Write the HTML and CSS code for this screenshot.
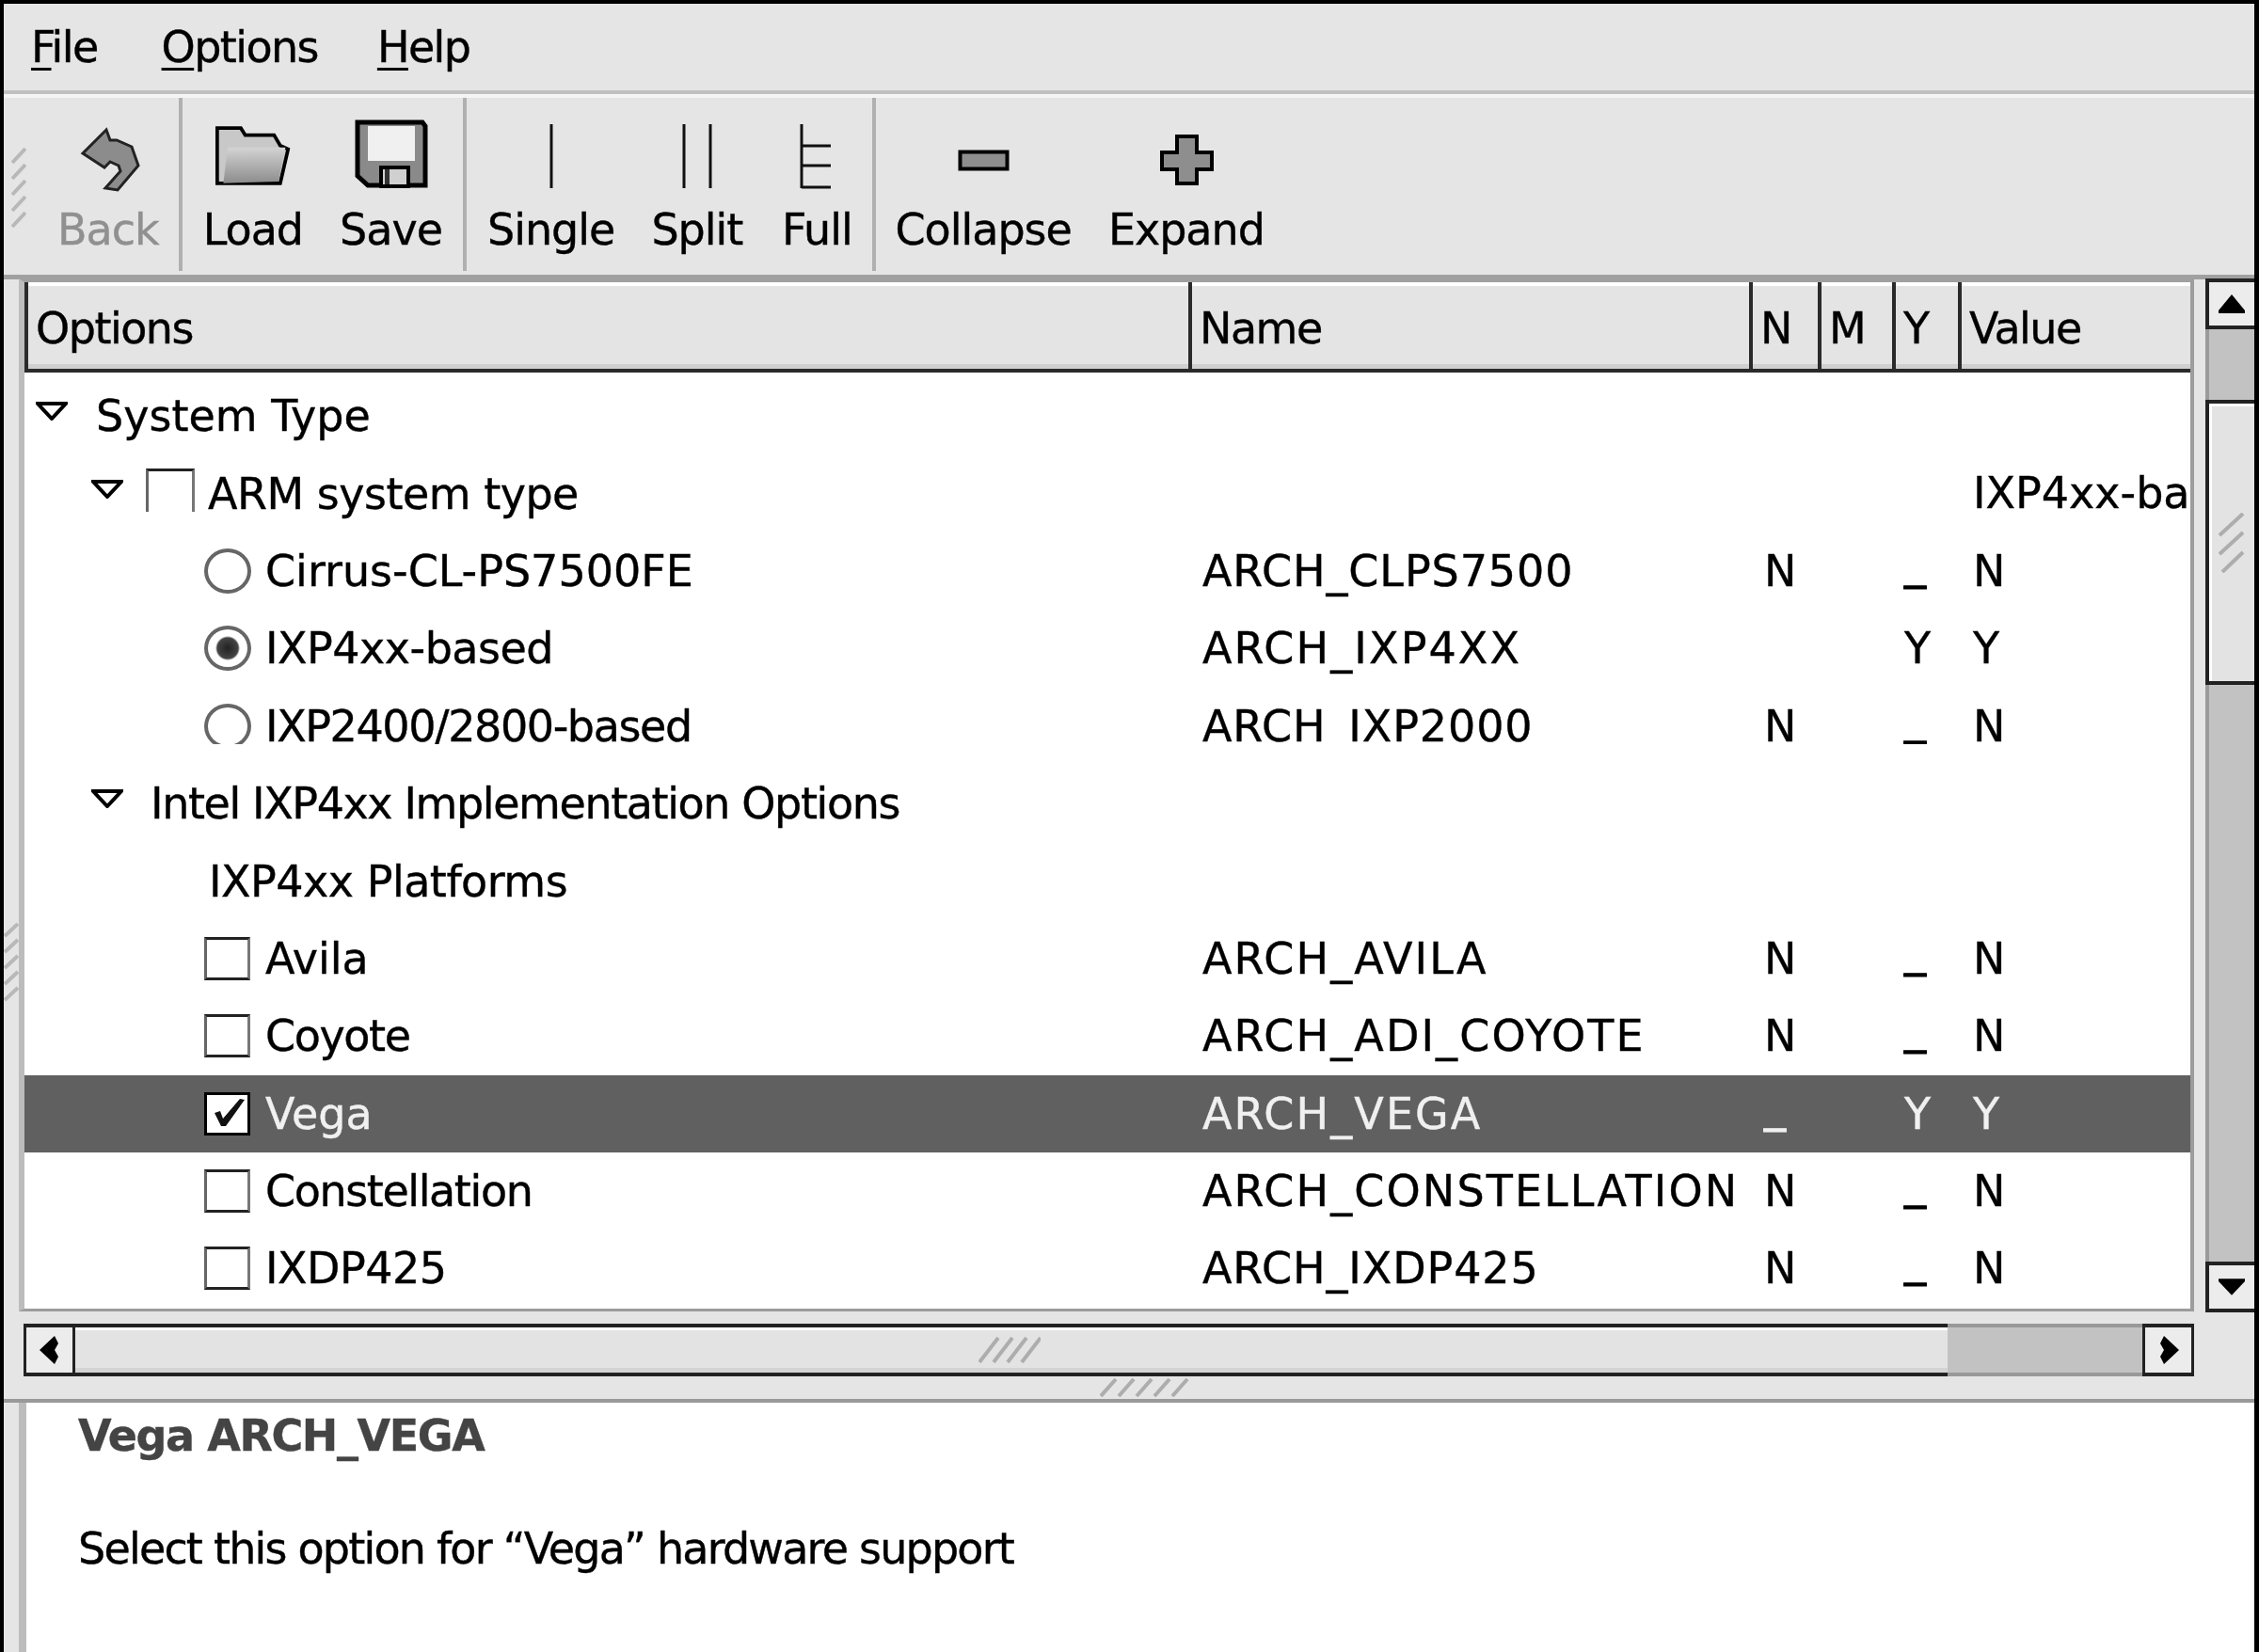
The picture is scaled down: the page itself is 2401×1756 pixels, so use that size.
FILE: index.html
```html
<!DOCTYPE html>
<html>

<head>
    <meta charset="utf-8">
    <title>Linux Kernel Configuration</title>
    <link rel="stylesheet" href="styles.css">
</head>

<body>
    <div class="window">
        <div class="menubar">
            <span><u>F</u>ile</span>
            <span><u>O</u>ptions</span>
            <span><u>H</u>elp</span>
        </div>

        <div class="toolbar">
            <div class="tb-group tb-first">
                <svg class="handle" viewBox="0 0 16 88">
                    <path d="M1 16 15 1M1 33 15 18M1 50 15 35M1 67 15 52M1 84 15 69" />
                </svg>
                <div class="tool disabled">
                    <svg class="icon" viewBox="75 127 80 76">
                        <path class="ic-fill" d="M113 138 88 163 111 178 117 172 126 176 128 182 112 200 125 202 147 176 140 156 124 149 117 149z" />
                    </svg>
                    Back
                </div>
            </div>
            <div class="tb-group">
                <div class="tool">
                    <svg class="icon" viewBox="230 127 86 76">
                        <defs>
                            <linearGradient id="folderGrad" x1="0" y1="0" x2="0" y2="1">
                                <stop offset="0" stop-color="#d4d4d4" />
                                <stop offset="1" stop-color="#8c8c8c" />
                            </linearGradient>
                        </defs>
                        <path class="ic-folder" d="M232 134H259L264 142H297L304 154 313 158 304 197H232z" />
                        <path class="ic-flap" d="M239 197 244 156H310L302 195z" />
                    </svg>
                    Load
                </div>
                <div class="tool">
                    <svg class="icon" viewBox="378 127 78 76">
                        <path class="ic-floppy" d="M381 130H450L453 134V197H392L381 187z" />
                        <rect class="ic-white" x="392" y="134" width="50" height="37" />
                        <rect class="ic-slide" x="406" y="178" width="29" height="20" />
                        <rect class="ic-bar" x="410" y="180" width="5" height="16" />
                    </svg>
                    Save
                </div>
            </div>
            <div class="tb-group tb-third">
                <div class="tool">
                    <svg class="icon" viewBox="542 127 80 76">
                        <path class="ic-thin" d="M582 132V200" />
                    </svg>
                    Single
                </div>
                <div class="tool">
                    <svg class="icon" viewBox="695 127 80 76">
                        <path class="ic-thin" d="M721 132V200M749 132V200" />
                    </svg>
                    Split
                </div>
                <div class="tool">
                    <svg class="icon" viewBox="825 127 80 76">
                        <path class="ic-thin" d="M849 132V200M849 155H880M849 176H880M849 199H880" />
                    </svg>
                    Full
                </div>
            </div>
            <div class="tb-group tb-last">
                <div class="tool">
                    <svg class="icon" viewBox="1006 127 80 76">
                        <rect class="ic-fill" x="1021.500" y="161.500" width="50" height="18" />
                    </svg>
                    Collapse
                </div>
                <div class="tool">
                    <svg class="icon" viewBox="1224 127 80 76">
                        <path class="ic-fill" d="M1254 145H1275V162H1291V180H1275V195H1254V180H1238V162H1254z" />
                    </svg>
                    Expand
                </div>
            </div>
        </div>

        <div class="work">
            <div class="strip">
                <svg class="grip-left" viewBox="0 0 16 90">
                    <path d="M1 14 15 1M1 31 15 18M1 48 15 35M1 65 15 52M1 82 15 69" />
                </svg>
            </div>
            <div class="tree-area">
                <div class="tree">
                    <div class="row-grid header">
                        <div>Options</div>
                        <div>Name</div>
                        <div>N</div>
                        <div>M</div>
                        <div>Y</div>
                        <div>Value</div>
                    </div>

                    <div class="rows">
                        <div class="row-grid row">
                            <div class="opt l0"><svg class="tri" viewBox="0 0 34 20"><path d="M2 2H32L17 18z" /></svg><span>System Type</span></div>
                            <div></div><div></div><div></div><div></div><div></div>
                        </div>
                        <div class="row-grid row">
                            <div class="opt l1"><svg class="tri" viewBox="0 0 34 20"><path d="M2 2H32L17 18z" /></svg><i class="check open"></i><span class="snug">ARM system type</span></div>
                            <div></div><div></div><div></div><div></div>
                            <div class="val cut">IXP4xx-ba</div>
                        </div>
                        <div class="row-grid row">
                            <div class="opt l2"><i class="radio"></i><span>Cirrus-CL-PS7500FE</span></div>
                            <div class="nm">ARCH_CLPS7500</div><div class="n">N</div><div></div><div class="y us">_</div><div class="val">N</div>
                        </div>
                        <div class="row-grid row">
                            <div class="opt l2"><i class="radio on"></i><span class="snug">IXP4xx-based</span></div>
                            <div class="nm wide">ARCH_IXP4XX</div><div></div><div></div><div class="y">Y</div><div class="val">Y</div>
                        </div>
                        <div class="row-grid row clipped">
                            <div class="opt l2"><i class="radio"></i><span class="tight">IXP2400/2800-based</span></div>
                            <div class="nm">ARCH_IXP2000</div><div class="n">N</div><div></div><div class="y us">_</div><div class="val">N</div>
                        </div>
                        <div class="row-grid row">
                            <div class="opt l1"><svg class="tri" viewBox="0 0 34 20"><path d="M2 2H32L17 18z" /></svg><span class="tight">Intel IXP4xx Implementation Options</span></div>
                            <div></div><div></div><div></div><div></div><div></div>
                        </div>
                        <div class="row-grid row">
                            <div class="opt l3"><span class="snug">IXP4xx Platforms</span></div>
                            <div></div><div></div><div></div><div></div><div></div>
                        </div>
                        <div class="row-grid row">
                            <div class="opt l2"><i class="check"></i><span>Avila</span></div>
                            <div class="nm wide">ARCH_AVILA</div><div class="n">N</div><div></div><div class="y us">_</div><div class="val">N</div>
                        </div>
                        <div class="row-grid row">
                            <div class="opt l2"><i class="check"></i><span class="tight">Coyote</span></div>
                            <div class="nm wide">ARCH_ADI_COYOTE</div><div class="n">N</div><div></div><div class="y us">_</div><div class="val">N</div>
                        </div>
                        <div class="row-grid row selected">
                            <div class="opt l2">
                                <i class="check on"><svg viewBox="0 0 43 40"><path d="M8 19 14 17 17 25 35 4 40 5 20 33 15 33z" /></svg></i><span>Vega</span>
                            </div>
                            <div class="nm wide">ARCH_VEGA</div><div class="n us">_</div><div></div><div class="y">Y</div><div class="val">Y</div>
                        </div>
                        <div class="row-grid row">
                            <div class="opt l2"><i class="check"></i><span class="tight">Constellation</span></div>
                            <div class="nm wide">ARCH_CONSTELLATION</div><div class="n">N</div><div></div><div class="y us">_</div><div class="val">N</div>
                        </div>
                        <div class="row-grid row">
                            <div class="opt l2"><i class="check"></i><span class="snug">IXDP425</span></div>
                            <div class="nm">ARCH_IXDP425</div><div class="n">N</div><div></div><div class="y us">_</div><div class="val">N</div>
                        </div>
                    </div>
                </div>

                <div class="hscroll">
                    <div class="sb-btn hbtn"><svg viewBox="0 0 22 30"><path d="M16 0 0 15 16 30 20 22 16 15 20 8z" /></svg></div>
                    <div class="hthumb">
                        <svg class="grip-h" viewBox="0 0 66 28"><path d="M1 27 21 1M16 27 36 1M31 27 51 1M46 27 66 1" /></svg>
                    </div>
                    <div class="htrough"></div>
                    <div class="sb-btn hbtn"><svg viewBox="0 0 22 30"><path d="M6 0 22 15 6 30 2 22 6 15 2 8z" /></svg></div>
                </div>
            </div>

            <div class="vscroll">
                <div class="sb-btn vbtn"><svg viewBox="0 0 28 20"><path d="M14 0 28 17V20H0V17z" /></svg></div>
                <div class="vtrough vtrough-top"></div>
                <div class="vthumb">
                    <svg class="grip-v" viewBox="0 0 28 64"><path d="M1 24 26 1M1 44 26 21M4 63 26 42" /></svg>
                </div>
                <div class="vtrough vtrough-rest"></div>
                <div class="sb-btn vbtn"><svg viewBox="0 0 32 20"><path d="M0 0H32V3L16 20 0 3z" /></svg></div>
            </div>
        </div>

        <div class="split">
            <svg class="grip-s" viewBox="0 0 96 20"><path d="M1 19 17 1M20 19 36 1M39 19 55 1M58 19 74 1M77 19 93 1" /></svg>
        </div>

        <div class="desc">
            <h4>Vega ARCH_VEGA</h4>
            <p>Select this option for “Vega” hardware support</p>
        </div>
    </div>
</body>

</html>
```

FILE: styles.css
```css
html,
body {
    margin: 0;
    height: 100%;
    overflow: hidden;
    background: #000;
}

.window {
    width: 2392px;
    height: 1752px;
    margin-top: 4px;
    margin-left: 4px;
    display: flex;
    flex-direction: column;
    background: #e5e5e5;
    color: #000;
    font-family: "DejaVu Sans", sans-serif;
    font-size: 46px;
    filter: blur(0.7px);
    -webkit-text-stroke: 0.4px;
}

/* Menu bar */
.menubar {
    height: 92px;
    display: flex;
    flex: none;
    gap: 63px;
    padding-left: 29px;
    align-items: center;
    letter-spacing: -1.6px;
    border-bottom: 4px solid #c0c0c0;
}

.menubar span:first-child {
    margin-right: 5px;
}

.menubar u {
    text-underline-offset: 6px;
    text-decoration-thickness: 3px;
}

/* Toolbar */
.toolbar {
    height: 188px;
    display: flex;
    flex: none;
    letter-spacing: -1px;
    border-top: 4px solid #f4f4f4;
    border-bottom: 5px solid #a0a0a0;
    box-sizing: content-box;
    margin-bottom: -1px;
}

.tb-group {
    display: flex;
    gap: 39px;
    padding: 0 22px;
    margin: 0 0 4px;
    border-right: 4px solid #b0b0b0;
}

.tb-first {
    padding: 0 21px 0 8px;
    gap: 33px;
}

.tb-third {
    padding-right: 19px;
}

.tb-last {
    padding-left: 20px;
    border-right: none;
}

.handle,
.grip-left {
    width: 16px;
    height: 88px;
    stroke: #b8b8b8;
    stroke-width: 4;
    fill: none;
}

.handle {
    margin-top: 53px;
}

.tool {
    display: flex;
    flex-direction: column;
    align-items: center;
    line-height: 50px;
    padding-top: 23px;
}

.tool.disabled {
    color: #909090;
}

.icon {
    width: 80px;
    height: 76px;
    margin-bottom: 16px;
    overflow: visible;
}

.ic-fill {
    fill: #8e8e8e;
    stroke: #000;
    stroke-width: 4;
}

.disabled .ic-fill {
    fill: #8c8c8c;
    stroke: #222;
    stroke-width: 3;
}

.ic-folder {
    fill: #c8c8c8;
    stroke: #000;
    stroke-width: 4;
}

.ic-flap {
    fill: url(#folderGrad);
}

.ic-floppy {
    fill: #8a8a8a;
    stroke: #000;
    stroke-width: 5;
}

.ic-white {
    fill: #f0f0f0;
}

.ic-slide {
    stroke: #000;
    stroke-width: 4;
    fill: #d0d0d0;
}

.ic-bar {
    fill: #333;
}

.ic-thin {
    fill: none;
    stroke: #111;
    stroke-width: 3;
}

/* Tree and scrollbars */
.work {
    height: 1167px;
    display: flex;
    flex: none;
}

.strip {
    width: 16px;
    flex: none;
    display: flex;
    flex-direction: column;
    padding-top: 685px;
    box-sizing: border-box;
}

.grip-left {
    height: 90px;
}

.tree-area {
    width: 2312px;
    flex: none;
}

.tree {
    height: 1098px;
    box-sizing: border-box;
    border-top: 4px solid #a0a0a0;
    border-left: 6px solid #bcbcbc;
    border-right: 4px solid #9c9c9c;
    border-bottom: 3px solid #9c9c9c;
    background: #fff;
    display: flex;
    flex-direction: column;
}

.row-grid {
    display: grid;
    grid-template-columns: 1237px 596px 73px 79px 70px 1fr;
}

.header {
    height: 96px;
    box-sizing: border-box;
    flex: none;
    background: #e4e4e4;
    border-bottom: 4px solid #2a2a2a;
    letter-spacing: -1.5px;
}

.header div {
    border-left: 4px solid #2a2a2a;
    box-shadow: inset 0 4px 0 #fff, inset 0 -5px 0 #d0d0d0;
    padding: 24px 0 0 8px;
    line-height: 50px;
}

.rows {
    padding-top: 5px;
}

.row {
    height: 82.4px;
    line-height: 82px;
    white-space: nowrap;
}

.clipped {
    clip-path: inset(0 0 22px 0);
}

.selected {
    background: #606060;
    color: #f0f0f0;
}

.opt {
    display: flex;
    align-items: center;
}

.snug {
    letter-spacing: -0.5px;
}

.tight {
    letter-spacing: -1.4px;
}

.l0 {
    padding-left: 12px;
}

.l1 {
    padding-left: 71px;
}

.l2 {
    padding-left: 191px;
}

.l3 {
    padding-left: 196px;
}

.tri {
    width: 34px;
    height: 20px;
    margin-bottom: 10px;
    margin-right: 30px;
    fill: #fff;
    stroke: #000;
    stroke-width: 4;
    flex: none;
}

.l1 .tri {
    margin-right: 29px;
}

.l1 .tri:has(+ .check) {
    margin-right: 24px;
}

.check {
    width: 49px;
    height: 46px;
    box-sizing: border-box;
    border: 3px solid #222;
    border-right-color: #777;
    border-left-color: #666;
    background: #fff;
    margin-right: 16px;
    flex: none;
}

.check.open {
    width: 52px;
    margin-right: 14px;
    margin-bottom: 8px;
    border-bottom: none;
}

.check.on {
    border-color: #000;
}

.check.on svg {
    display: block;
    fill: #111;
}

.radio {
    width: 50px;
    height: 48px;
    box-sizing: border-box;
    border: 4px solid #666;
    border-radius: 50%;
    background: #fff;
    margin-right: 15px;
    flex: none;
}

.radio.on {
    background: radial-gradient(circle, #222 0, #444 11px, #fff 13px);
}

.nm {
    padding-left: 15px;
    letter-spacing: 0.9px;
}

.nm.wide {
    letter-spacing: 2.1px;
}

.n {
    padding-left: 16px;
}

.y {
    padding-left: 13px;
}

.us {
    line-height: 66px;
    -webkit-text-stroke: 1px;
}

.val {
    padding-left: 16px;
}

.cut {
    overflow: hidden;
}

/* Scrollbar parts */
.sb-btn {
    display: flex;
    align-items: center;
    justify-content: center;
    box-sizing: border-box;
    flex: none;
    background: #ececec;
    border: 4px solid #222;
}

.sb-btn svg {
    fill: #000;
}

.hscroll {
    height: 56px;
    margin: 13px 0 0 5px;
    display: flex;
}

.hbtn {
    width: 55px;
    border-left-width: 3px;
    border-right-width: 3px;
}

.hbtn svg {
    width: 22px;
    height: 30px;
}

.hthumb {
    flex: none;
    width: 1990px;
    box-sizing: border-box;
    border-top: 4px solid #222;
    border-bottom: 4px solid #222;
    box-shadow: inset 0 3px 0 #fff, inset 0 -5px 0 #d4d4d4;
    background: #e3e3e3;
    display: flex;
    align-items: center;
}

.grip-h {
    width: 66px;
    height: 28px;
    margin-left: 960px;
    stroke: #adadad;
    stroke-width: 4;
    fill: none;
}

.htrough {
    flex: 1;
    background: #c2c2c2;
    border-top: 4px solid #999;
    border-bottom: 4px solid #999;
}

.vscroll {
    width: 52px;
    height: 1099px;
    margin-left: 12px;
    display: flex;
    flex-direction: column;
    flex: none;
}

.vbtn {
    height: 54px;
    border-right: none;
}

.vbtn svg {
    width: 28px;
    height: 20px;
}

.vtrough {
    background: #c2c2c2;
    border-left: 4px solid #9a9a9a;
}

.vtrough-top {
    height: 75px;
}

.vtrough-rest {
    flex: 1;
}

.vthumb {
    height: 303px;
    box-sizing: border-box;
    border: 4px solid #222;
    border-right: none;
    background: #e3e3e3;
    box-shadow: inset 3px 3px 0 #fff;
    display: flex;
    flex-direction: column;
    align-items: center;
    padding-top: 116px;
}

.grip-v {
    width: 28px;
    height: 64px;
    stroke: #adadad;
    stroke-width: 4;
    fill: none;
}

.split {
    height: 24px;
    flex: none;
    display: flex;
    align-items: center;
    justify-content: center;
    border-bottom: 4px solid #999;
    box-sizing: content-box;
    padding-left: 34px;
}

.split svg {
    width: 96px;
    height: 20px;
    stroke: #adadad;
    stroke-width: 4;
    fill: none;
}

/* Description */
.desc {
    flex: 1;
    margin-left: 16px;
    background: #fff;
    border-left: 8px solid #bcbcbc;
    padding: 5px 0 0 55px;
    line-height: 60px;
}

.desc h4 {
    margin: 0 0 60px;
    color: #444;
    font-size: 46px;
    letter-spacing: -1.4px;
}

.desc p {
    margin: 0;
    letter-spacing: -1.8px;
}
```
